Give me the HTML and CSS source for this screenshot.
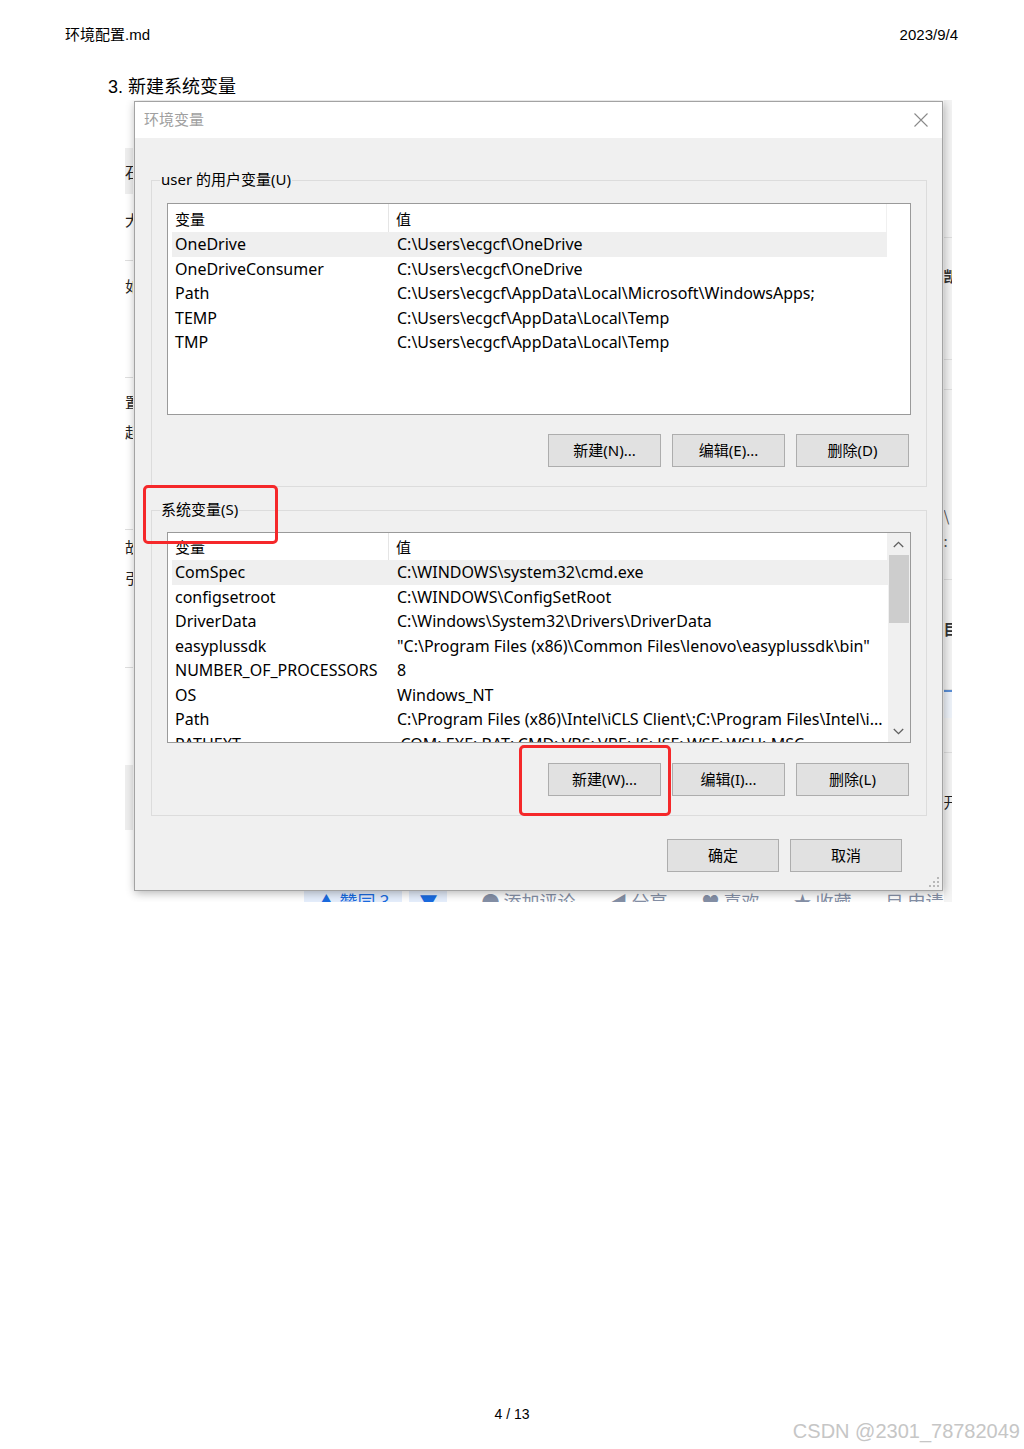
FILE: index.html
```html
<!DOCTYPE html>
<html lang="zh-CN">
<head>
<meta charset="utf-8">
<title>环境配置.md</title>
<link rel="stylesheet" href="styles.css">
</head>
<body>
<div class="page">
  <header class="hdr"><span>环境配置.md</span><span>2023/9/4</span></header>
  <h3 class="step">3. 新建系统变量</h3>

  <div class="shot">
    <div class="bg">
      <div class="bg-left">
        <div class="sp h48"></div>
        <div class="band h46 ch">石</div>
        <div class="ch h50">大</div>
        <div class="sp h17 rule"></div>
        <div class="ch h48">如</div>
        <div class="sp h69 rule"></div>
        <div class="ch h46">置</div>
        <div class="ch h14">起</div>
        <div class="sp h92 rule"></div>
        <div class="ch h32">故</div>
        <div class="ch h30">引</div>
        <div class="sp h76 rule"></div>
        <div class="sp h97"></div>
        <div class="band h65"></div>
      </div>
      <div class="bg-mid">
        <div class="bg-toolbar">
          <span class="vote">▲ 赞同 3</span>
          <span class="vote down">▼</span>
          <span class="act">● 添加评论</span>
          <span class="act">◀ 分享</span>
          <span class="act">♥ 喜欢</span>
          <span class="act">★ 收藏</span>
          <span class="act">目 申请</span>
        </div>
      </div>
      <div class="bg-right">
        <div class="sp h138 rule"></div>
        <div class="ch h74 dark">凯</div>
        <div class="sp h48 rule"></div>
        <div class="sp h30 rule"></div>
        <div class="sp h115"></div>
        <div class="ch h20 thin">\</div>
        <div class="ch h30 thin">:</div>
        <div class="sp h25 rule"></div>
        <div class="ch h96 dark">目</div>
        <div class="sp h14 rule"></div>
        <div class="blue h28"></div>
        <div class="sp h35 rule"></div>
        <div class="ch h96">开</div>
      </div>
    </div>

    <div class="dialog">
      <div class="titlebar">
        <span class="title">环境变量</span>
        <svg class="close" width="14" height="14" viewBox="0 0 14 14"><path d="M0.5 0.5 L13.5 13.5 M13.5 0.5 L0.5 13.5" stroke="#8a8a8a" stroke-width="1.1" fill="none"/></svg>
      </div>
      <div class="dlg-body">
        <section class="group g1">
          <div class="legend">user 的用户变量(U)</div>
          <div class="list">
            <div class="cols">
              <div class="lhead"><span class="hc1">变量</span><span class="hc2">值</span></div>
              <div class="row sel"><span>OneDrive</span><span>C:\Users\ecgcf\OneDrive</span></div>
              <div class="row"><span>OneDriveConsumer</span><span>C:\Users\ecgcf\OneDrive</span></div>
              <div class="row"><span>Path</span><span>C:\Users\ecgcf\AppData\Local\Microsoft\WindowsApps;</span></div>
              <div class="row"><span>TEMP</span><span>C:\Users\ecgcf\AppData\Local\Temp</span></div>
              <div class="row"><span>TMP</span><span>C:\Users\ecgcf\AppData\Local\Temp</span></div>
            </div>
            <div class="noscroll"></div>
          </div>
          <div class="btns">
            <div class="btn">新建(N)...</div>
            <div class="btn">编辑(E)...</div>
            <div class="btn">删除(D)</div>
          </div>
        </section>

        <section class="group g2">
          <div class="legend">系统变量(S)</div>
          <div class="list">
            <div class="cols">
              <div class="lhead"><span class="hc1">变量</span><span class="hc2">值</span></div>
              <div class="row sel"><span>ComSpec</span><span>C:\WINDOWS\system32\cmd.exe</span></div>
              <div class="row"><span>configsetroot</span><span>C:\WINDOWS\ConfigSetRoot</span></div>
              <div class="row"><span>DriverData</span><span>C:\Windows\System32\Drivers\DriverData</span></div>
              <div class="row"><span>easyplussdk</span><span>"C:\Program Files (x86)\Common Files\lenovo\easyplussdk\bin"</span></div>
              <div class="row"><span>NUMBER_OF_PROCESSORS</span><span>8</span></div>
              <div class="row"><span>OS</span><span>Windows_NT</span></div>
              <div class="row"><span>Path</span><span>C:\Program Files (x86)\Intel\iCLS Client\;C:\Program Files\Intel\i...</span></div>
              <div class="row"><span>PATHEXT</span><span>.COM;.EXE;.BAT;.CMD;.VBS;.VBE;.JS;.JSE;.WSF;.WSH;.MSC</span></div>
            </div>
            <div class="vscroll">
              <div class="arrow"><svg width="11" height="7" viewBox="0 0 11 7"><path d="M0.8 6 L5.5 1.3 L10.2 6" stroke="#5f5f5f" stroke-width="1.3" fill="none"/></svg></div>
              <div class="thumb"></div>
              <div class="track"></div>
              <div class="arrow"><svg width="11" height="7" viewBox="0 0 11 7"><path d="M0.8 1 L5.5 5.7 L10.2 1" stroke="#5f5f5f" stroke-width="1.3" fill="none"/></svg></div>
            </div>
          </div>
          <div class="btns">
            <div class="btn">新建(W)...</div>
            <div class="btn">编辑(I)...</div>
            <div class="btn">删除(L)</div>
          </div>
        </section>

        <div class="btns main">
          <div class="btn">确定</div>
          <div class="btn">取消</div>
        </div>
      </div>
      <svg class="grip" width="12" height="12" viewBox="0 0 12 12">
        <rect x="9" y="1" width="2" height="2" fill="#b8b8b8"/>
        <rect x="5" y="5" width="2" height="2" fill="#b8b8b8"/>
        <rect x="9" y="5" width="2" height="2" fill="#b8b8b8"/>
        <rect x="1" y="9" width="2" height="2" fill="#b8b8b8"/>
        <rect x="5" y="9" width="2" height="2" fill="#b8b8b8"/>
        <rect x="9" y="9" width="2" height="2" fill="#b8b8b8"/>
      </svg>
    </div>

    <div class="mark mark-1"></div>
    <div class="mark mark-2"></div>
  </div>

  <footer class="pgno">4 / 13</footer>
</div>
<div class="watermark">CSDN @2301_78782049</div>
</body>
</html>
```
FILE: styles.css
```css
* { box-sizing: border-box; margin: 0; padding: 0; }
html, body { background: #fff; }
body {
  width: 1024px;
  height: 1449px;
  overflow: hidden;
  position: relative;
  font-family: "Liberation Sans", "Noto Sans CJK SC", sans-serif;
  color: #000;
}
.page { display: flex; flex-direction: column; height: 1449px; }

.hdr {
  display: flex;
  justify-content: space-between;
  padding: 26px 66px 0 65px;
  height: 70px;
  font-size: 15px;
  line-height: 18px;
}
.step {
  margin: 6px 0 0 108px;
  height: 22px;
  font-size: 18px;
  line-height: 22px;
  font-weight: normal;
}

/* screenshot */
.shot {
  position: relative;
  margin: 2px 0 0 125px;
  width: 827px;
  height: 802px;
  overflow: hidden;
  background: #fff;
}
.bg { display: flex; height: 100%; }
.bg-left, .bg-right {
  width: 9px;
  overflow: hidden;
  display: flex;
  flex-direction: column;
  font-family: "Noto Sans CJK SC", sans-serif;
  font-size: 15px;
  color: #222;
  background: #fff;
}
.bg-right { background: #f4f4f4; }
.bg-mid { flex: 1; padding-top: 786px; }
.sp, .ch, .band, .blue { flex: none; white-space: nowrap; }
.ch { display: flex; align-items: center; }
.band { background: #eeeeee; }
.rule { border-bottom: 1px solid #dedede; }
.dark { font-weight: bold; color: #333; }
.thin { color: #555; }
.blue { border-top: 2px solid #5b8fd6; background: #eef3fa; }
.h14 { height: 14px; } .h17 { height: 17px; } .h20 { height: 20px; }
.h25 { height: 25px; } .h28 { height: 28px; } .h35 { height: 35px; }
.h30 { height: 30px; } .h32 { height: 32px; } .h48 { height: 48px; }
.h46 { height: 46px; } .h50 { height: 50px; } .h65 { height: 65px; }
.h69 { height: 69px; } .h74 { height: 74px; } .h76 { height: 76px; }
.h92 { height: 92px; } .h96 { height: 96px; } .h97 { height: 97px; }
.h115 { height: 115px; } .h138 { height: 138px; }

.bg-toolbar {
  display: flex;
  align-items: center;
  gap: 34px;
  padding-left: 171px;
  height: 30px;
  font-family: "Noto Sans CJK SC", sans-serif;
  font-size: 18px;
  color: #8590a6;
  white-space: nowrap;
}
.vote {
  background: #e5eefc;
  color: #1a6be0;
  width: 98px;
  text-align: center;
  height: 30px;
  line-height: 30px;
  margin-right: -27px;
}
.vote.down { width: 38px; margin-right: 0; }

/* dialog */
.dialog {
  position: absolute;
  left: 9px;
  top: 1px;
  width: 809px;
  height: 790px;
  border: 1px solid #a3a3a3;
  background: #f0f0f0;
  box-shadow: 1px 2px 9px rgba(0, 0, 0, 0.3);
  display: flex;
  flex-direction: column;
  font-family: "Noto Sans", "Noto Sans CJK SC", sans-serif;
  font-size: 16px;
  color: #000;
}
.titlebar {
  height: 36px;
  flex: none;
  background: #fff;
  display: flex;
  align-items: center;
  justify-content: space-between;
  padding: 0 14px 3px 9px;
}
.close { margin-top: 3px; }
.title {
  font-family: "Noto Sans CJK SC", sans-serif;
  font-size: 15px;
  color: #a0a0a0;
}
.dlg-body {
  flex: 1;
  display: flex;
  flex-direction: column;
  padding: 42px 15px 0 16px;
}
.group {
  border: 1px solid #dcdcdc;
  display: flex;
  flex-direction: column;
  padding: 0 15px 19px;
}
.group + .group { margin-top: 23px; }
.legend {
  align-self: flex-start;
  margin: -12px 0 0 -7px;
  height: 20px;
  line-height: 20px;
  padding: 0 1px;
  background: #f0f0f0;
  font-family: "Noto Sans", "Noto Sans CJK SC", sans-serif;
  font-size: 15px;
}
.list {
  margin-top: 14px;
  height: 212px;
  border: 1px solid #9a9a9a;
  background: #fff;
  display: flex;
  overflow: hidden;
}
.g2 .list { margin-top: 13px; height: 211px; }
.cols { flex: 1; margin-left: 4px; min-width: 0; }
.noscroll { width: 23px; flex: none; }
.lhead {
  display: flex;
  height: 28px;
  align-items: stretch;
  border-right: 1px solid #f0f0f0;
  font-family: "Noto Sans CJK SC", sans-serif;
  font-size: 15px;
}
.g2 .lhead { height: 27px; }
.hc1 {
  width: 217px;
  padding-left: 3px;
  border-right: 1px solid #e5e5e5;
  display: flex;
  align-items: center;
}
.hc2 { padding-left: 7px; display: flex; align-items: center; }
.row {
  display: grid;
  grid-template-columns: 222px 1fr;
  padding-left: 3px;
  height: 24.5px;
  line-height: 24.5px;
  white-space: nowrap;
  overflow: hidden;
}
.row.sel { background: #efefef; }

.vscroll {
  width: 22px;
  flex: none;
  background: #f0f0f0;
  display: flex;
  flex-direction: column;
  padding-right: 1px;
}
.arrow {
  height: 22px;
  display: flex;
  align-items: center;
  justify-content: center;
  flex: none;
}
.thumb { height: 68px; background: #cdcdcd; flex: none; margin-left: 1px; }
.track { flex: 1; }

.btns {
  display: flex;
  justify-content: flex-end;
  gap: 11px;
  margin-top: 19px;
  padding-right: 2px;
}
.g2 .btns { margin-top: 20px; }
.btns.main { margin-top: 23px; padding-right: 25px; }
.btn {
  width: 113px;
  height: 33px;
  padding-bottom: 3px;
  background: #e1e1e1;
  border: 1px solid #adadad;
  display: flex;
  align-items: center;
  justify-content: center;
  font-family: "Noto Sans", "Noto Sans CJK SC", sans-serif;
  font-size: 15px;
  color: #000;
}
.btns.main .btn { width: 112px; height: 33px; }

.grip { position: absolute; right: 2px; bottom: 2px; }

.mark {
  position: absolute;
  border: 3px solid #f5282a;
  border-radius: 5px;
}
.mark-1 { left: 18px; top: 385px; width: 135px; height: 59px; }
.mark-2 { left: 394px; top: 645px; width: 152px; height: 71px; }

.pgno {
  margin-top: 503px;
  text-align: center;
  font-size: 14px;
  line-height: 18px;
  height: 18px;
}
.watermark {
  position: absolute;
  right: 4px;
  top: 1420px;
  font-family: "Liberation Sans", sans-serif;
  font-size: 20px;
  line-height: 22px;
  color: #c6c6c6;
}
```
